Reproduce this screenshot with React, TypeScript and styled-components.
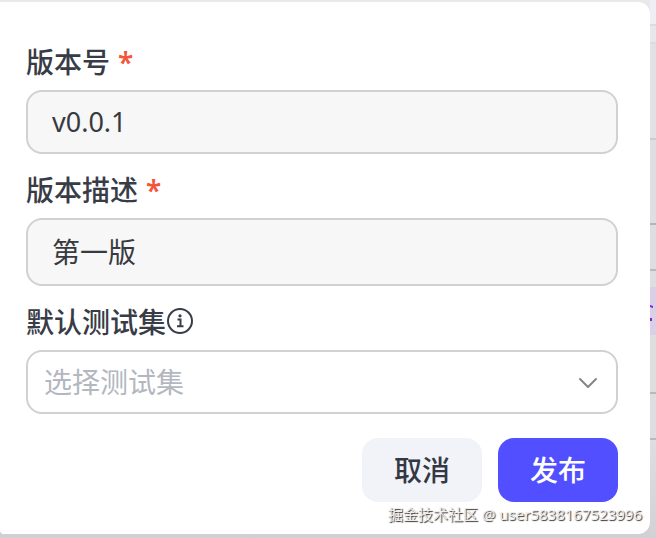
import React from 'react';
import styled, { createGlobalStyle } from 'styled-components';

const GlobalStyle = createGlobalStyle`
  *, *::before, *::after { box-sizing: border-box; }
  body {
    margin: 0;
    background: #d0d0d4;
    font-family: "Noto Sans", "Noto Sans CJK SC", sans-serif;
    color: #383c47;
  }
`;

const Page = styled.main`
  position: relative;
  display: flex;
  background: linear-gradient(to bottom, #e9e9eb 0, #e0e0e2 240px, #d0d0d4 100%);
`;

const Dialog = styled.form`
  flex: 1;
  min-width: 0;
  margin: 2px 0 4px;
  padding: 40px 32px 32px 26px;
  display: flex;
  flex-direction: column;
  gap: 16px;
  background: #fff;
  border-radius: 0 12px 12px 4px;
`;

const Field = styled.div`
  display: flex;
  flex-direction: column;
  gap: 10px;
`;

const LabelRow = styled.div`
  display: flex;
  align-items: center;
  height: 38px;
`;

const Label = styled.label`
  font-family: "Noto Sans CJK SC", sans-serif;
  font-size: 28px;
  font-weight: 500;
  line-height: 38px;
`;

const Required = styled.span`
  margin-left: 8px;
  color: #f2553a;
  font-family: "Noto Sans", sans-serif;
  font-size: 28px;
  font-weight: 600;
  line-height: 1;
`;

const TextInput = styled.input<{ $height: number; $size: number }>`
  width: 100%;
  height: ${(p) => p.$height}px;
  padding: 0 24px 2px;
  border: 2px solid #d0d1d4;
  border-radius: 16px;
  background: #f7f7f7;
  color: #383a40;
  font: 400 ${(p) => p.$size}px "Noto Sans", "Noto Sans CJK SC", sans-serif;
  outline: none;
`;

const SelectWrap = styled.div`
  position: relative;
  display: flex;
`;

const Select = styled.select`
  appearance: none;
  width: 100%;
  height: 64px;
  padding: 0 56px 2px 16px;
  border: 2px solid #d0d1d4;
  border-radius: 16px;
  background: #fff;
  color: #b3b7bf;
  font: 400 28px "Noto Sans CJK SC", sans-serif;
  outline: none;
`;

const Chevron = styled.svg`
  position: absolute;
  right: 20px;
  top: 22px;
  width: 20px;
  height: 20px;
  pointer-events: none;
`;

const Actions = styled.div`
  display: flex;
  justify-content: flex-end;
  gap: 16px;
  margin-top: 8px;
`;

const Button = styled.button<{ $primary?: boolean }>`
  width: 120px;
  height: 64px;
  padding: 0 0 2px;
  border: 0;
  border-radius: 16px;
  background: ${(p) => (p.$primary ? '#514fff' : '#f1f3f9')};
  color: ${(p) => (p.$primary ? '#fff' : '#343844')};
  font: 500 28px "Noto Sans CJK SC", sans-serif;
  cursor: pointer;
`;

const Backdrop = styled.div`
  flex: 0 0 6px;
  display: flex;
  flex-direction: column;
`;

const Band = styled.div<{ $height: number; $fill: string; $line?: string }>`
  height: ${(p) => p.$height}px;
  background: ${(p) => p.$fill};
  border-bottom: ${(p) => (p.$line ? `2px solid ${p.$line}` : '0')};
`;

const BandMark = styled.svg`
  display: block;
  width: 6px;
  height: 48px;
`;

const Watermark = styled.div`
  position: absolute;
  right: 14px;
  bottom: 12px;
  font: 400 15px/24px "Noto Sans", "Noto Sans CJK SC", sans-serif;
  color: #eee;
  text-shadow: 1px 1px 1px #333;
  white-space: nowrap;
`;

export default function App() {
  return (
    <>
      <GlobalStyle />
      <Page>
        <Dialog onSubmit={(e) => e.preventDefault()}>
          <Field>
            <LabelRow>
              <Label htmlFor="version">
                版本号<Required>*</Required>
              </Label>
            </LabelRow>
            <TextInput id="version" $height={64} $size={27} defaultValue="v0.0.1" required />
          </Field>
          <Field>
            <LabelRow>
              <Label htmlFor="description">
                版本描述<Required>*</Required>
              </Label>
            </LabelRow>
            <TextInput id="description" $height={68} $size={28} defaultValue="第一版" required />
          </Field>
          <Field>
            <LabelRow>
              <Label htmlFor="dataset">默认测试集</Label>
              <svg width="28" height="28" viewBox="0 0 28 28" fill="none" stroke="#383c47" strokeWidth="2" aria-hidden="true">
                <circle cx="14" cy="14" r="12" />
                <path d="M11.5 12.5h3v6.5M11 19.2h6.5" />
                <circle cx="14" cy="8.8" r="1.6" fill="#383c47" stroke="none" />
              </svg>
            </LabelRow>
            <SelectWrap>
              <Select id="dataset" defaultValue="">
                <option value="">选择测试集</option>
              </Select>
              <Chevron viewBox="0 0 20 20" fill="none" stroke="#858587" strokeWidth="2" strokeLinecap="round" strokeLinejoin="round" aria-hidden="true">
                <path d="M2 7l8 8 8-8" />
              </Chevron>
            </SelectWrap>
          </Field>
          <Actions>
            <Button type="button">取消</Button>
            <Button type="submit" $primary>发布</Button>
          </Actions>
        </Dialog>
        <Backdrop aria-hidden="true">
          <Band $height={26} $fill="#efeef5" $line="#dcdce0" />
          <Band $height={18} $fill="#e8e8ea" $line="#dcdcdf" />
          <Band $height={96} $fill="#e2e2e5" $line="#cccbd2" />
          <Band $height={85} $fill="#dfdfe1" $line="#b5b5b9" />
          <Band $height={46} $fill="#dedee1" $line="#b9b9bd" />
          <Band $height={16} $fill="#dedee1" />
          <Band $height={48} $fill="#d9cfe6">
            <BandMark viewBox="0 0 6 48" fill="#8a22cc">
              <path d="M0 18l3 1v2l-3-1zM0 31h2v3H0z" />
            </BandMark>
          </Band>
          <Band $height={59} $fill="#dededf" $line="#b9b9bd" />
          <Band $height={46} $fill="#dedee1" $line="#b9b9bd" />
          <Band $height={98} $fill="linear-gradient(#dedee1, #d2d2d6)" />
        </Backdrop>
        <Watermark>掘金技术社区 @ user5838167523996</Watermark>
      </Page>
    </>
  );
}
